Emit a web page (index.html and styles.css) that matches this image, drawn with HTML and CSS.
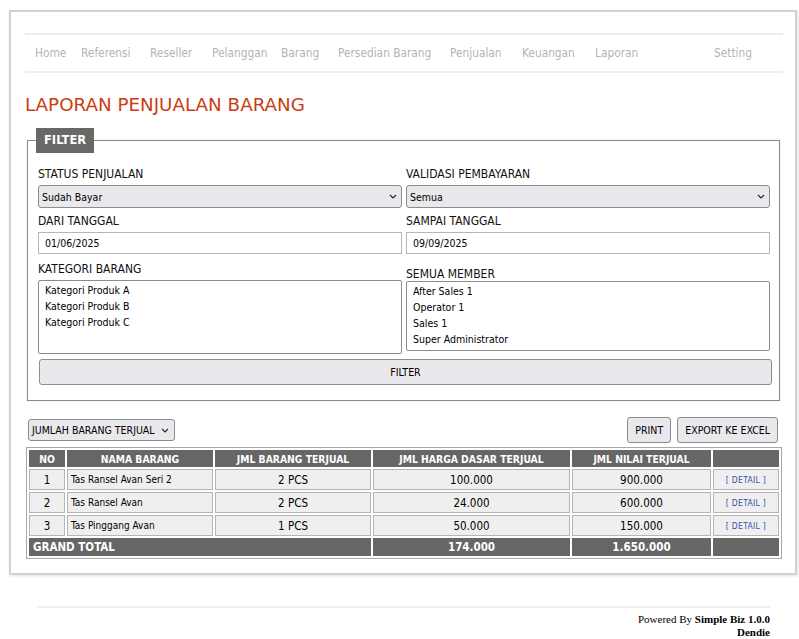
FILE: index.html
```html
<!DOCTYPE html>
<html>
<head>
<meta charset="utf-8">
<title>Laporan Penjualan Barang</title>
<link rel="stylesheet" href="styles.css">
</head>
<body>
<div class="page">
  <nav class="menu">
    <a class="m-home">Home</a>
    <a class="m-ref">Referensi</a>
    <a class="m-res">Reseller</a>
    <a class="m-pel">Pelanggan</a>
    <a class="m-bar">Barang</a>
    <a class="m-per">Persedian Barang</a>
    <a class="m-pen">Penjualan</a>
    <a class="m-keu">Keuangan</a>
    <a class="m-lap">Laporan</a>
    <a class="m-set">Setting</a>
  </nav>

  <h1 class="title">LAPORAN PENJUALAN BARANG</h1>

  <fieldset class="filter">
    <legend class="filter-legend">FILTER</legend>
    <div class="form-grid">
      <div class="field">
        <label class="lbl">STATUS PENJUALAN</label>
        <div class="select"><span>Sudah Bayar</span><svg class="chev" width="8" height="5" viewBox="0 0 8 5"><polyline points="1,1 4,4 7,1" fill="none" stroke="#222" stroke-width="1.1"/></svg></div>
      </div>
      <div class="field">
        <label class="lbl">VALIDASI PEMBAYARAN</label>
        <div class="select"><span>Semua</span><svg class="chev" width="8" height="5" viewBox="0 0 8 5"><polyline points="1,1 4,4 7,1" fill="none" stroke="#222" stroke-width="1.1"/></svg></div>
      </div>
      <div class="field">
        <label class="lbl">DARI TANGGAL</label>
        <div class="input">01/06/2025</div>
      </div>
      <div class="field">
        <label class="lbl">SAMPAI TANGGAL</label>
        <div class="input">09/09/2025</div>
      </div>
      <div class="field">
        <label class="lbl">KATEGORI BARANG</label>
        <div class="listbox list-kat">
          <div>Kategori Produk A</div>
          <div>Kategori Produk B</div>
          <div>Kategori Produk C</div>
        </div>
      </div>
      <div class="field field-member">
        <label class="lbl">SEMUA MEMBER</label>
        <div class="listbox list-mem">
          <div>After Sales 1</div>
          <div>Operator 1</div>
          <div>Sales 1</div>
          <div>Super Administrator</div>
        </div>
      </div>
    </div>
    <div class="btn btn-filter">FILTER</div>
  </fieldset>

  <div class="toolbar">
    <div class="select select-small"><span>JUMLAH BARANG TERJUAL</span><svg class="chev" width="8" height="5" viewBox="0 0 8 5"><polyline points="1,1 4,4 7,1" fill="none" stroke="#222" stroke-width="1.1"/></svg></div>
    <div class="actions">
      <div class="btn btn-act">PRINT</div>
      <div class="btn btn-act">EXPORT KE EXCEL</div>
    </div>
  </div>

  <table class="report">
    <colgroup>
      <col class="c-no"><col class="c-nama"><col class="c-jml"><col class="c-harga"><col class="c-nilai"><col class="c-det">
    </colgroup>
    <thead>
      <tr>
        <th>NO</th>
        <th>NAMA BARANG</th>
        <th>JML BARANG TERJUAL</th>
        <th>JML HARGA DASAR TERJUAL</th>
        <th>JML NILAI TERJUAL</th>
        <th></th>
      </tr>
    </thead>
    <tbody>
      <tr>
        <td class="num">1</td>
        <td class="name">Tas Ransel Avan Seri 2</td>
        <td class="num">2 PCS</td>
        <td class="num">100.000</td>
        <td class="num">900.000</td>
        <td class="det"><a>[ DETAIL ]</a></td>
      </tr>
      <tr>
        <td class="num">2</td>
        <td class="name">Tas Ransel Avan</td>
        <td class="num">2 PCS</td>
        <td class="num">24.000</td>
        <td class="num">600.000</td>
        <td class="det"><a>[ DETAIL ]</a></td>
      </tr>
      <tr>
        <td class="num">3</td>
        <td class="name">Tas Pinggang Avan</td>
        <td class="num">1 PCS</td>
        <td class="num">50.000</td>
        <td class="num">150.000</td>
        <td class="det"><a>[ DETAIL ]</a></td>
      </tr>
    </tbody>
    <tfoot>
      <tr>
        <th colspan="3" class="gt-label">GRAND TOTAL</th>
        <th>174.000</th>
        <th>1.650.000</th>
        <th></th>
      </tr>
    </tfoot>
  </table>
</div>

<footer class="footer">
  <div class="footer-text">Powered By <b>Simple Biz 1.0.0</b><br><b>Dendie</b></div>
</footer>
</body>
</html>
```

FILE: styles.css
```css
html, body {
  margin: 0;
  padding: 0;
  background: #ffffff;
}

body {
  font-family: "DejaVu Sans Condensed", "DejaVu Sans", sans-serif;
  color: #000;
}

.page {
  margin: 10px 2px 0 9px;
  width: 756px;
  border: 2px solid #d2d2d2;
  box-shadow: 1px 1px 3px rgba(0,0,0,0.12);
  padding: 21px 14px 14px 14px;
}

/* NAV */
.menu {
  display: flex;
  align-items: center;
  height: 36px;
  border-top: 2px solid #eeeeee;
  border-bottom: 2px solid #eeeeee;
  margin-right: -2px;
  padding-left: 10px;
  font-size: 11.8px;
}
.menu a {
  color: #b4b4b4;
  text-decoration: none;
  white-space: nowrap;
}
.m-home { width: 46px; }
.m-ref { width: 69px; }
.m-res { width: 62px; }
.m-pel { width: 69px; }
.m-bar { width: 57px; }
.m-per { width: 112px; }
.m-pen { width: 72px; }
.m-keu { width: 73px; }
.m-set { margin-left: auto; margin-right: 31px; }

/* TITLE */
.title {
  margin: 20px 0 0 0;
  font-family: "DejaVu Sans", sans-serif;
  font-weight: normal;
  font-size: 18.3px;
  line-height: 24px;
  color: #cc3d10;
}

/* FILTER */
.filter {
  margin: 11px 1px 0 2px;
  border: 1px solid #8a8a8a;
  padding: 14px 8px 15px 10px;
  box-shadow: 0 0 2px rgba(0,0,0,0.08);
}
.filter-legend {
  background: #686868;
  color: #fff;
  font-family: "DejaVu Sans", sans-serif;
  font-weight: bold;
  font-size: 11.5px;
  line-height: 25px;
  padding: 0 8px;
  margin-left: -2px;
}

.form-grid {
  display: grid;
  grid-template-columns: 364px 364px;
  column-gap: 4px;
}
.field {
  display: flex;
  flex-direction: column;
}
.lbl {
  font-size: 12px;
  line-height: 14px;
  padding: 0 0 4px 0;
  color: #111;
}
.select {
  display: flex;
  justify-content: space-between;
  align-items: center;
  height: 21px;
  border: 1px solid #8c8c8c;
  border-radius: 3px;
  background: #e9e9ed;
  font-size: 10.5px;
  padding: 0 4px 0 3px;
  margin-bottom: 6px;
}
.chev {
  display: block;
}
.input {
  height: 20px;
  border: 1px solid #b8b8b8;
  font-size: 10.5px;
  line-height: 20px;
  padding: 0 6px;
  margin-bottom: 8px;
}
.listbox {
  border: 1px solid #8c8c8c;
  border-radius: 2px;
  font-size: 10.5px;
  line-height: 16px;
  padding: 1px 6px;
}
.list-kat { height: 70px; }
.list-mem { height: 66px; }
.field-member { padding-top: 5px; }
.field-member .lbl { padding-bottom: 0; }

.btn {
  background: #e9e9ed;
  border: 1px solid #8c8c8c;
  border-radius: 3px;
  font-size: 10.5px;
  display: flex;
  align-items: center;
  justify-content: center;
  color: #000;
}
.btn-filter {
  height: 24px;
  margin: 5px -1px 0 1px;
}

/* TOOLBAR */
.toolbar {
  display: flex;
  justify-content: space-between;
  align-items: center;
  margin: 16px 3px 4px 3px;
}
.select-small {
  width: 137px;
  height: 20px;
  margin: 0;
  padding: 0 5px 0 3px;
}
.actions {
  display: flex;
  gap: 6px;
}
.btn-act {
  height: 24px;
  padding: 0 7px;
  font-size: 10.5px;
}

/* TABLE */
.report {
  width: 756px;
  margin-left: 1px;
  table-layout: fixed;
  border: 1px solid #a8a8a8;
  border-spacing: 2px;
  font-size: 11px;
}
.c-no { width: 36px; }
.c-nama { width: 146px; }
.c-jml { width: 156px; }
.c-harga { width: 197px; }
.c-nilai { width: 139px; }
.c-det { width: 66px; }

.report th {
  background: #666666;
  color: #fff;
  font-weight: bold;
  font-size: 10.3px;
  height: 15px;
  padding: 0;
  border: 1px solid #666;
}
.report td {
  background: #efefef;
  border: 1px solid #b5b5b5;
  height: 19px;
  padding: 0;
}
.report td.num {
  text-align: center;
  font-size: 11.5px;
}
.report td.name {
  padding-left: 3px;
  font-size: 10px;
}
.report td.det {
  text-align: center;
  font-size: 8.5px;
}
.det a {
  color: #3450a8;
  letter-spacing: 0.3px;
}
.report tfoot th {
  height: 16px;
  font-size: 11.5px;
}
.report th.gt-label {
  text-align: left;
  padding-left: 3px;
}

/* FOOTER */
.footer {
  margin: 31px 29px 0 37px;
  border-top: 2px solid #eeeeee;
  padding-top: 5px;
}
.footer-text {
  text-align: right;
  font-family: "Liberation Serif", serif;
  font-size: 11px;
  line-height: 13px;
}
```
